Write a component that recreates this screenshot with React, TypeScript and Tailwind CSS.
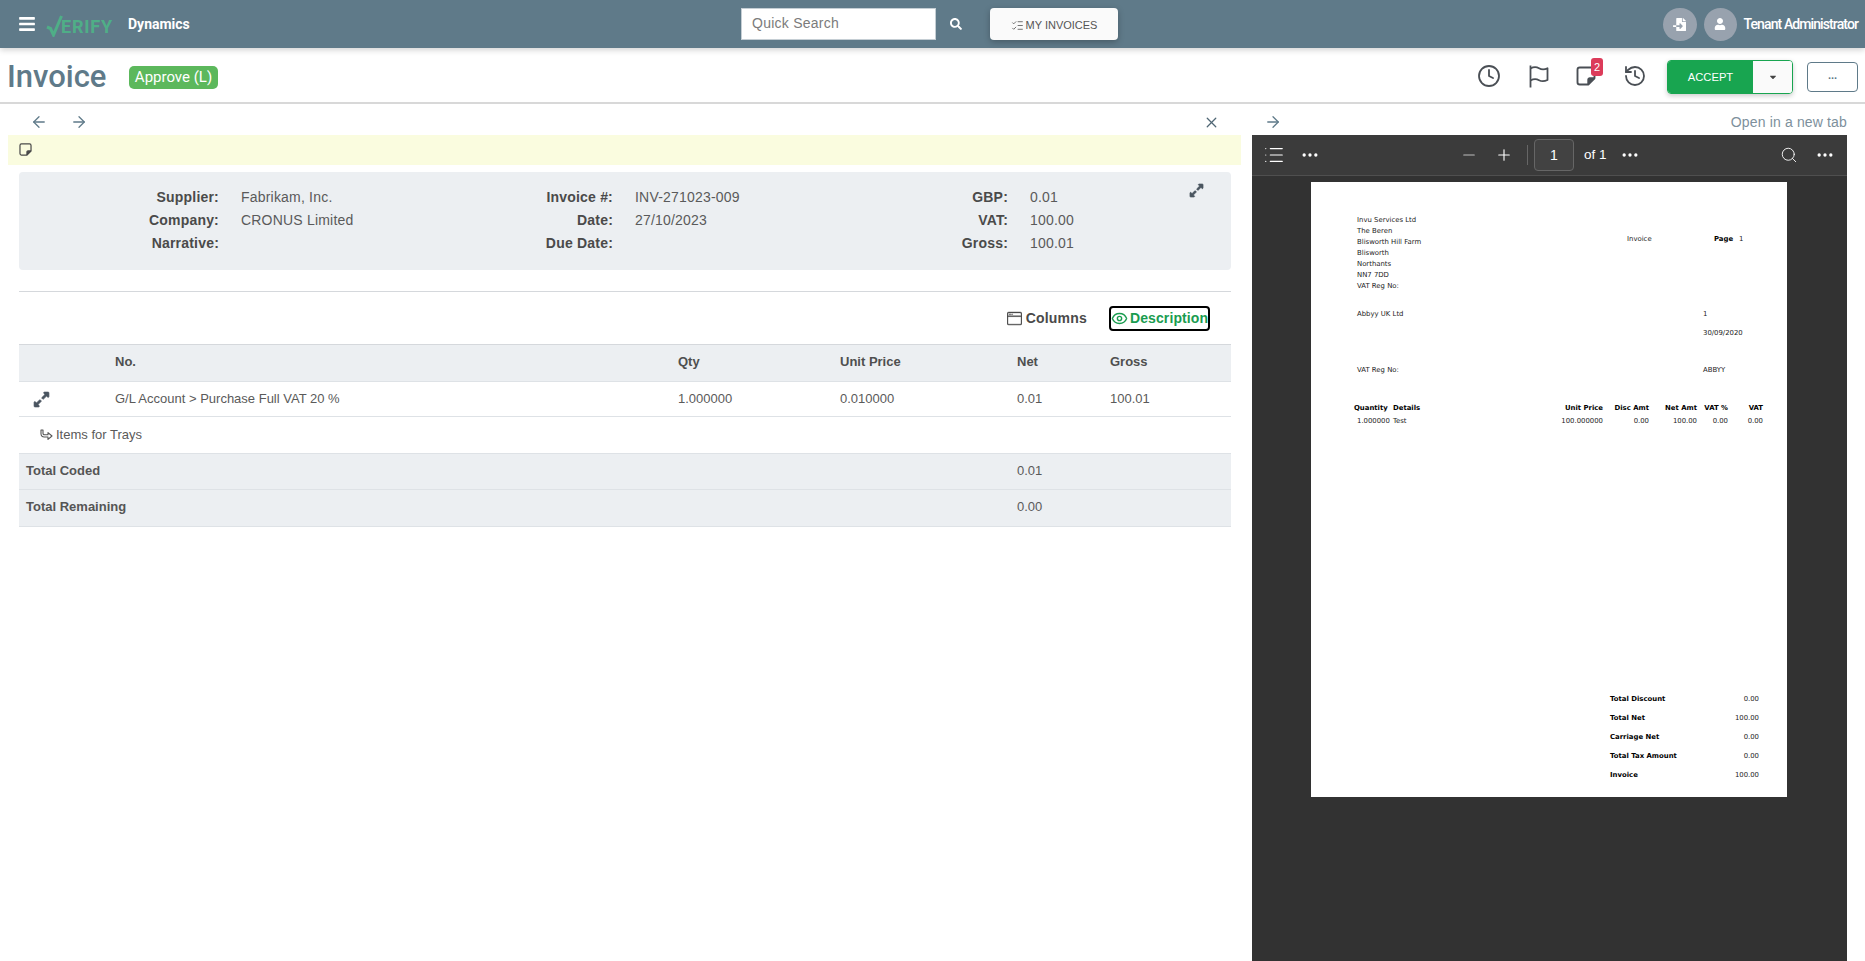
import React from "react";
import { ArrowLeft, ArrowRight, X, Clock, History, Minus, Plus, Search, MoreHorizontal, List, ListChecks, Eye } from "lucide-react";
import { FaBars, FaSearch, FaUser, FaFileImport, FaExpandAlt, FaCaretDown } from "react-icons/fa";
import { BsWindow } from "react-icons/bs";

const sans = "font-['Liberation_Sans',Arial,sans-serif]";
const pdfFont = "font-['DejaVu_Sans',sans-serif]";

function NoteIcon({ size = 14, className = "" }: { size?: number; className?: string }) {
  return (
    <svg width={size} height={size} viewBox="0 0 16 16" fill="none" className={className} stroke="currentColor" strokeWidth="1.5" strokeLinejoin="round">
      <path d="M3 1.2h10A1.8 1.8 0 0 1 14.8 3v6.8L9.8 14.8H3A1.8 1.8 0 0 1 1.2 13V3A1.8 1.8 0 0 1 3 1.2Z" />
      <path d="M14.8 9.8H11a1.2 1.2 0 0 0-1.2 1.2v3.8" fill="currentColor" />
    </svg>
  );
}

function FlagIcon({ className = "" }: { className?: string }) {
  return (
    <svg width="20" height="23" viewBox="0 0 20 23" fill="none" stroke="currentColor" strokeWidth="1.8" strokeLinejoin="round" className={className}>
      <path d="M1.500 0.500V22.500" />
      <path d="M1.500 3.500C5 1.500 7.500 1.800 10 3.200s5 1.700 8.500 0V15c-3.500 1.700-6 1.600-8.500.2s-5-1.700-8.500.3" />
    </svg>
  );
}

function TrayArrow() {
  return (
    <svg width="13" height="12" viewBox="0 0 13 12" fill="none" stroke="#555" strokeWidth="1.1" strokeLinejoin="round">
      <path d="M1 1h2v3.2c0 1 .6 1.600 1.600 1.600H8V3.600l4 3.400-4 3.400V8H4.200C2.200 8 1 6.700 1 4.700V1Z" />
    </svg>
  );
}

function Logo() {
  return (
    <div className="flex items-center h-6 w-[65px] ml-[10px] mt-[3px]">
      <svg width="17" height="22" viewBox="0 0 17 22" fill="none" className="shrink-0">
        <path d="M1 12l3.500 1.500 3 6.500L15.500 1" stroke="#4fae87" strokeWidth="3" />
      </svg>
      <span className="text-[#4fae87] text-[18px] leading-none font-bold tracking-[0.8px] font-['Roboto',sans-serif] -ml-[2px] mt-[3px]">ERIFY</span>
    </div>
  );
}

function Line({ children, className = "" }: { children?: React.ReactNode; className?: string }) {
  return <div className={`h-[11px] leading-[11px] whitespace-nowrap ${className}`}>{children}</div>;
}

function PdfPage() {
  const address = ["Invu Services Ltd", "The Beren", "Blisworth Hill Farm", "Blisworth", "Northants", "NN7 7DD", "VAT Reg No:"];
  const totals = [
    ["Total Discount", "0.00"],
    ["Total Net", "100.00"],
    ["Carriage Net", "0.00"],
    ["Total Tax Amount", "0.00"],
    ["Invoice", "100.00"],
  ];
  return (
    <div className={`bg-white w-[476px] h-[615px] mt-[6px] ml-[59px] pt-[33px] pl-[46px] text-[6.900px] text-[#1c1c1c] ${pdfFont}`}>
      <div className="flex items-start">
        <div className="w-[270px]">
          {address.map((a) => (
            <Line key={a}>{a}</Line>
          ))}
        </div>
        <Line className="w-[87px] mt-[19px]">Invoice</Line>
        <Line className="w-[25px] mt-[19px] font-bold text-black">Page</Line>
        <Line className="mt-[19px]">1</Line>
      </div>
      <div className="flex mt-[17px]">
        <Line className="w-[346px]">Abbyy UK Ltd</Line>
        <Line>1</Line>
      </div>
      <Line className="mt-[8px] ml-[346px]">30/09/2020</Line>
      <div className="flex mt-[26px]">
        <Line className="w-[346px]">VAT Reg No:</Line>
        <Line>ABBYY</Line>
      </div>
      <div className="grid grid-cols-[39px_100px_110px_46px_48px_31px_35px] -ml-[3px] mt-[27px] h-[11px] leading-[11px] font-bold text-black whitespace-nowrap">
        <div>Quantity</div>
        <div>Details</div>
        <div className="text-right">Unit Price</div>
        <div className="text-right">Disc Amt</div>
        <div className="text-right">Net Amt</div>
        <div className="text-right">VAT %</div>
        <div className="text-right">VAT</div>
      </div>
      <div className="grid grid-cols-[39px_100px_110px_46px_48px_31px_35px] -ml-[3px] mt-[2px] h-[11px] leading-[11px] whitespace-nowrap">
        <div className="pl-[3px]">1.000000</div>
        <div>Test</div>
        <div className="text-right">100.000000</div>
        <div className="text-right">0.00</div>
        <div className="text-right">100.00</div>
        <div className="text-right">0.00</div>
        <div className="text-right">0.00</div>
      </div>
      <div className="ml-[253px] w-[149px] mt-[267px] flex flex-col gap-[8px]">
        {totals.map(([k, v]) => (
          <div key={k} className="flex justify-between h-[11px] leading-[11px] whitespace-nowrap">
            <span className="font-bold text-black">{k}</span>
            <span>{v}</span>
          </div>
        ))}
      </div>
    </div>
  );
}

function InfoGrid() {
  const rows = [
    ["Supplier:", "Fabrikam, Inc.", "Invoice #:", "INV-271023-009", "GBP:", "0.01"],
    ["Company:", "CRONUS Limited", "Date:", "27/10/2023", "VAT:", "100.00"],
    ["Narrative:", "", "Due Date:", "", "Gross:", "100.01"],
  ];
  return (
    <div className="grid grid-cols-[200px_172px_222px_172px_223px_1fr] auto-rows-[23px] pt-[14px] text-[14px] tracking-[0.2px] leading-[23px]">
      {rows.flat().map((c, i) =>
        i % 2 === 0 ? (
          <div key={i} className="text-right font-bold text-[#4a4a4a]">{c}</div>
        ) : (
          <div key={i} className="pl-[22px] text-[#5a5a5a]">{c}</div>
        )
      )}
    </div>
  );
}

const tableCols = "grid grid-cols-[89px_563px_162px_177px_93px_128px] items-center border-b border-[#dee2e6] text-[13px]";

function LinesTable() {
  return (
    <div className="ml-[19px] w-[1212px] border-t border-[#d5d8dc]">
      <div className={`${tableCols} h-[37px] bg-[#eceff2] font-bold text-[#4f4f4f] pb-[3px]`}>
        <div />
        <div className="pl-[7px]">No.</div>
        <div className="pl-[7px]">Qty</div>
        <div className="pl-[7px]">Unit Price</div>
        <div className="pl-[7px]">Net</div>
        <div className="pl-[7px]">Gross</div>
      </div>
      <div className={`${tableCols} h-[35px] text-[#5a5a5a]`}>
        <div className="pl-[14px] text-[#4a5560]"><FaExpandAlt size={17} className="stroke-[20px]" /></div>
        <div className="pl-[7px]">G/L Account &gt; Purchase Full VAT 20 %</div>
        <div className="pl-[7px]">1.000000</div>
        <div className="pl-[7px]">0.010000</div>
        <div className="pl-[7px]">0.01</div>
        <div className="pl-[7px]">100.01</div>
      </div>
      <div className="flex items-center gap-[3px] h-[37px] pl-[21px] border-b border-[#dee2e6] text-[13px] text-[#5a5a5a]">
        <TrayArrow />
        <span>Items for Trays</span>
      </div>
      <div className={`${tableCols} h-[36px] bg-[#eceff2] pb-[1px]`}>
        <div className="col-span-4 pl-[7px] font-bold text-[#555]">Total Coded</div>
        <div className="pl-[7px] text-[#5a5a5a]">0.01</div>
      </div>
      <div className={`${tableCols} h-[37px] bg-[#eceff2] pb-[2px]`}>
        <div className="col-span-4 pl-[7px] font-bold text-[#555]">Total Remaining</div>
        <div className="pl-[7px] text-[#5a5a5a]">0.00</div>
      </div>
    </div>
  );
}

export default function App() {
  return (
    <div className={`w-full h-screen overflow-hidden bg-white flex flex-col ${sans}`}>
      {/* Top bar */}
      <header className="h-12 shrink-0 bg-[#5f7a89] flex items-center shadow-[0_2px_6px_rgba(0,0,0,0.18)] z-10">
        <div className="w-[741px] flex items-center pl-[18px] shrink-0">
          <FaBars size={18} className="text-white" />
          <Logo />
          <span className="ml-[17px] text-white font-bold text-[14px] font-['Roboto',sans-serif]">Dynamics</span>
        </div>
        <div className="w-[195px] h-8 bg-white border border-[#c5ced4] flex items-center pl-[10px] pb-[2px] text-[14px] tracking-[0.25px] text-[#7b7b7b]">Quick Search</div>
        <FaSearch size={12} className="text-white ml-[14px]" />
        <button className="ml-[28px] w-[128px] h-8 rounded bg-[#fafafa] shadow-[0_2px_6px_rgba(0,0,0,0.25)] flex items-center justify-center gap-[2px] pt-[2px] text-[11px] text-[#555]">
          <ListChecks size={13} strokeWidth={1.5} />
          MY INVOICES
        </button>
        <div className="ml-auto flex items-center pr-[7px]">
          <div className="w-[34px] h-[33px] rounded-full bg-[#98a2ae] flex items-center justify-center text-white">
            <FaFileImport size={13} />
          </div>
          <div className="ml-[7px] w-[33px] h-[33px] rounded-full bg-[#98a2ae] flex items-center justify-center text-white">
            <FaUser size={12} />
          </div>
          <span className="ml-[7px] text-white text-[14px] font-medium tracking-[-0.9px] font-['Roboto',sans-serif]">Tenant Administrator</span>
        </div>
      </header>

      {/* Title row */}
      <div className="h-[56px] shrink-0 border-b-2 border-[#d8d8d8] flex items-center pt-[2px]">
        <h1 className="ml-[7px] w-[122px] text-[31px] font-medium text-[#5f7a89] font-['Roboto',sans-serif] leading-none">Invoice</h1>
        <span className="mt-[3px] w-[89px] h-[23px] rounded-[5px] bg-[#5cb85c] text-white text-[15px] flex items-center justify-center font-['Roboto',sans-serif]">Approve (L)</span>
        <div className="ml-auto flex items-center text-[#4a4f55]">
          <Clock size={24} strokeWidth={1.8} />
          <FlagIcon className="ml-[28px]" />
          <div className="relative ml-[27px]">
            <NoteIcon size={20} />
            <span className="absolute -top-[8px] left-[15px] w-[12px] h-[18px] rounded-[3px] bg-[#dc3b5a] text-white text-[11px] leading-[18px] text-center">2</span>
          </div>
          <History size={24} strokeWidth={1.8} className="ml-[27px]" />
          <div className="ml-[20px] mt-[1px] flex h-[34px] w-[126px] rounded shadow-[0_2px_5px_rgba(0,0,0,0.2)] border border-[#18a550] overflow-hidden">
            <div className="w-[85px] bg-[#18a550] text-white text-[11.200px] pt-[1px] flex items-center justify-center">ACCEPT</div>
            <div className="flex-1 bg-[#fafafa] flex items-center justify-center text-[#444]"><FaCaretDown size={10} /></div>
          </div>
          <div className="ml-[14px] mr-[7px] mt-[1px] w-[51px] h-[30px] rounded border border-[#5f7a89] flex items-center justify-center text-[#5f7a89] text-[11px] font-bold pb-[3px]">...</div>
        </div>
      </div>

      {/* Body */}
      <div className="flex-1 flex min-h-0">
        <main className="w-[1252px] shrink-0 flex flex-col">
          <div className="h-[31px] pt-[5px] flex items-center text-[#5f7a89] shrink-0">
            <ArrowLeft size={18} strokeWidth={1.7} className="ml-[30px]" />
            <ArrowRight size={18} strokeWidth={1.7} className="ml-[22px]" />
            <X size={17} strokeWidth={1.8} className="ml-auto mr-[32px] text-[#4f6674]" />
          </div>
          <div className="ml-2 w-[1233px] h-[30px] bg-[#fafcdf] flex items-center pl-[11px] pb-[2px] text-[#4a4a4a] shrink-0">
            <NoteIcon size={13} />
          </div>
          <section className="relative ml-[19px] mt-[7px] w-[1212px] h-[98px] rounded bg-[#eceff2] shrink-0">
            <InfoGrid />
            <FaExpandAlt size={15} className="absolute top-[11px] right-[27px] text-[#4a5560] stroke-[20px]" />
          </section>
          <div className="ml-[19px] w-[1212px] mt-[21px] border-t border-[#d5d8dc]" />
          <div className="h-[52px] ml-[19px] w-[1212px] flex items-center justify-end text-[14px] font-bold shrink-0">
            <BsWindow size={15} className="text-[#4a4a4a] shrink-0 stroke-[0.4px]" />
            <span className="ml-[4px] text-[#4a4a4a] tracking-[0.2px]">Columns</span>
            <div className="ml-[22px] mr-[21px] w-[101px] h-[25px] shrink-0 rounded border-2 border-black flex items-center text-[#1a9c50] whitespace-nowrap tracking-[0.1px]">
              <Eye size={17} className="shrink-0" />
              <span className="ml-[2px]">Description</span>
            </div>
          </div>
          <LinesTable />
        </main>

        {/* PDF */}
        <aside className="w-[613px] shrink-0 flex flex-col pr-[18px]">
          <div className="h-[31px] pt-[5px] flex items-center justify-between shrink-0 text-[#7d909c]">
            <ArrowRight size={18} strokeWidth={1.7} className="ml-[12px] text-[#5f7a89]" />
            <span className="text-[14px] tracking-[0.15px]">Open in a new tab</span>
          </div>
          <div className="flex-1 bg-[#323232] flex flex-col">
            <div className="h-[41px] bg-[#3b3b3b] border-b border-[#4f4f4f] flex items-center text-white shrink-0">
              <List size={22} strokeWidth={1.3} className="ml-[11px]" />
              <MoreHorizontal size={20} className="ml-[15px]" />
              <Minus size={18} strokeWidth={1.5} className="ml-[140px] text-[#bdbdbd]" />
              <Plus size={18} strokeWidth={1.5} className="ml-[17px]" />
              <div className="ml-[14px] h-[20px] border-l border-[#666]" />
              <div className="ml-[6px] w-[40px] h-[32px] rounded-sm border border-[#666] bg-[#424242] flex items-center justify-center text-[14px]">1</div>
              <span className="ml-[10px] text-[13.500px]">of 1</span>
              <MoreHorizontal size={20} className="ml-[13px]" />
              <Search size={18} strokeWidth={1.2} className="ml-[140px]" />
              <MoreHorizontal size={20} className="ml-[17px]" />
            </div>
            <PdfPage />
          </div>
        </aside>
      </div>
    </div>
  );
}
